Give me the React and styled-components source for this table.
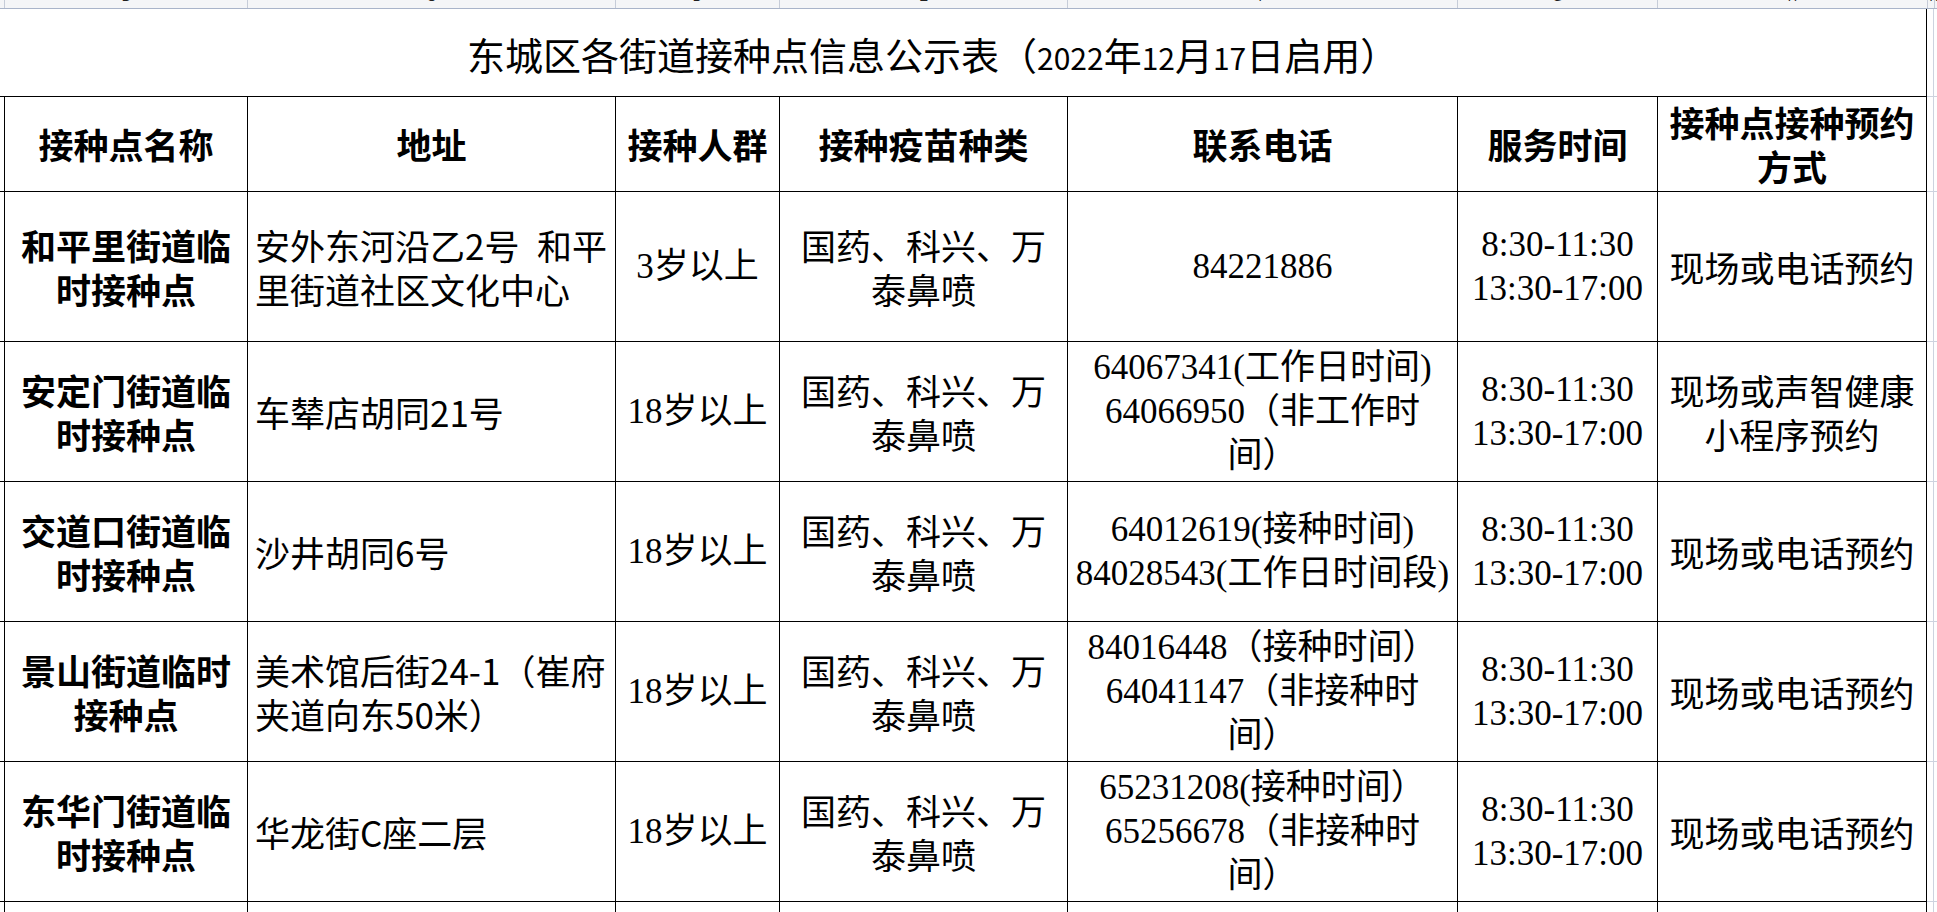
import styled, { createGlobalStyle } from "styled-components";

const GlobalStyle = createGlobalStyle`
  html, body {
    margin: 0;
    padding: 0;
    background: #fff;
    overflow: hidden;
  }
  body {
    font-family: "Liberation Serif", "Noto Sans CJK SC", serif;
    color: #000;
    text-autospace: no-autospace;
  }
  * { box-sizing: border-box; }
`

// gutter, B..H, then the narrow I column and the rest of the sheet
const COLS = "4px 243px 368px 164px 288px 390px 200px 270px 7px 1fr";

const ColumnBar = styled.div`
  display: grid;
  grid-template-columns: ${COLS};
  height: 9px;
  background: #f4f5f7;
  border-bottom: 1px solid #a9b4c9;
  overflow: hidden;
`

const ColLetter = styled.div`
  border-left: ${props => props.$first ? "none" : "1px solid #c6ccd8"};
  text-align: center;
  font: 13px/14px "Liberation Sans", Arial, sans-serif;
  color: #1f1f1f;
  overflow: hidden;

  span {
    display: block;
    margin-top: -10px;
  }
`

const Sheet = styled.div`
  display: grid;
  grid-template-columns: ${COLS};
  grid-template-rows: 88px 95px 150px 140px 140px 140px 140px 150px;
`

const Title = styled.div`
  grid-column: 1 / span 8;
  padding-left: 467px;
  padding-top: 2px;
  border-bottom: 1px solid #000;
  border-right: 1px solid #000;
  font-family: "Noto Sans CJK SC", sans-serif;
  font-size: 38px;
  line-height: 86px;
  white-space: nowrap;
`

// half-width digits of the title are smaller than the CJK font's own
const Num = styled.span`
  font-size: 30px;
`

const Gutter = styled.div`
  border-bottom: 1px solid #000;
`

const Filler = styled.div`
  border-bottom: 1px solid #cdd3df;
  border-right: ${props => props.$narrow ? "1px solid #cdd3df" : "none"};
`

const Cell = styled.div`
  display: flex;
  flex-direction: column;
  justify-content: center;
  align-items: ${props => props.$left ? "flex-start" : "center"};
  padding: ${props => props.$left ? "0 0 0 7px" : "0"};
  border-left: 1px solid #000;
  border-bottom: 1px solid #000;
  border-right: ${props => props.$last ? "1px solid #000" : "none"};
  font-family: ${props => props.$song
    ? `"Noto Sans CJK SC", sans-serif`
    : `"Liberation Serif", "Noto Sans CJK SC", serif`};
  font-size: 35px;
  line-height: 44px;
  font-weight: ${props => props.$bold ? 700 : 400};
  text-align: ${props => props.$left ? "left" : "center"};
  overflow: hidden;
`

const Line = styled.span`
  display: block;
  white-space: pre;
`

const letters = ["", "B", "C", "D", "E", "F", "G", "H", "I", "J"];

const header = [
  ["接种点名称"],
  ["地址"],
  ["接种人群"],
  ["接种疫苗种类"],
  ["联系电话"],
  ["服务时间"],
  ["接种点接种预约", "方式"],
];

const vaccine = ["国药、科兴、万", "泰鼻喷"];
const hours = ["8:30-11:30", "13:30-17:00"];

const sites = [
  {
    name: ["和平里街道临", "时接种点"],
    addr: ["安外东河沿乙2号\u2002和平", "里街道社区文化中心"],
    age: "3岁以上",
    phone: ["84221886"],
    mode: ["现场或电话预约"],
  },
  {
    name: ["安定门街道临", "时接种点"],
    addr: ["车辇店胡同21号"],
    age: "18岁以上",
    phone: ["64067341(工作日时间)", "64066950（非工作时", "间）"],
    mode: ["现场或声智健康", "小程序预约"],
  },
  {
    name: ["交道口街道临", "时接种点"],
    addr: ["沙井胡同6号"],
    age: "18岁以上",
    phone: ["64012619(接种时间)", "84028543(工作日时间段)"],
    mode: ["现场或电话预约"],
  },
  {
    name: ["景山街道临时", "接种点"],
    addr: ["美术馆后街24-1（崔府", "夹道向东50米）"],
    age: "18岁以上",
    phone: ["84016448（接种时间）", "64041147（非接种时", "间）"],
    mode: ["现场或电话预约"],
  },
  {
    name: ["东华门街道临", "时接种点"],
    addr: ["华龙街C座二层"],
    age: "18岁以上",
    phone: ["65231208(接种时间）", "65256678（非接种时", "间）"],
    mode: ["现场或电话预约"],
  },
];

function Lines({ items }) {
  return items.map((t, i) => <Line key={i}>{t}</Line>);
}

function Edge() {
  return (
    <>
      <Filler $narrow />
      <Filler />
    </>
  );
}

function Row({ site }) {
  return (
    <>
      <Gutter />
      <Cell $bold $song>
        <Lines items={site.name} />
      </Cell>
      <Cell $left $song>
        <Lines items={site.addr} />
      </Cell>
      <Cell>
        <Line>{site.age}</Line>
      </Cell>
      <Cell $song>
        <Lines items={vaccine} />
      </Cell>
      <Cell>
        <Lines items={site.phone} />
      </Cell>
      <Cell>
        <Lines items={hours} />
      </Cell>
      <Cell $song $last>
        <Lines items={site.mode} />
      </Cell>
      <Edge />
    </>
  );
}

export default function App() {
  return (
    <>
      <GlobalStyle />
      <ColumnBar>
        {letters.map((l, i) => (
          <ColLetter key={i} $first={i === 0}>
            <span>{l}</span>
          </ColLetter>
        ))}
      </ColumnBar>

      <Sheet>
        <Title>
          东城区各街道接种点信息公示表（<Num>2022</Num>年<Num>12</Num>月<Num>17</Num>日启用）
        </Title>
        <Edge />

        <Gutter />
        {header.map((h, i) => (
          <Cell key={i} $bold $song $last={i === header.length - 1}>
            <Lines items={h} />
          </Cell>
        ))}
        <Edge />

        {sites.map((s, i) => (
          <Row key={i} site={s} />
        ))}

        {/* next row, cut off by the window */}
        <Gutter />
        {header.map((h, i) => (
          <Cell key={i} $last={i === header.length - 1} />
        ))}
        <Edge />
      </Sheet>
    </>
  );
}
